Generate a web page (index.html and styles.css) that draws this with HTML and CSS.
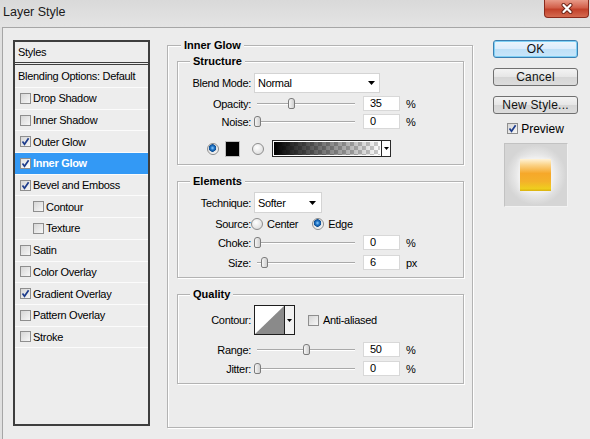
FILE: index.html
```html
<!DOCTYPE html>
<html lang="en">
<head>
    <meta charset="UTF-8">
    <title>Layer Style</title>
    <link rel="stylesheet" href="styles.css">
</head>
<body>

<div class="titlebar">
    <span class="title">Layer Style</span>
    <div class="close">
        <svg width="14" height="11" viewBox="0 0 14 11">
            <path d="M3.5 2 L10.5 9 M10.5 2 L3.5 9" stroke="#6a2317" stroke-width="4" stroke-linecap="round"/>
            <path d="M3.5 2 L10.5 9 M10.5 2 L3.5 9" stroke="#fff" stroke-width="2.2" stroke-linecap="round"/>
        </svg>
    </div>
</div>

<div class="client">

    <div class="styles-list">
        <div class="styles-head">Styles</div>
        <div class="blend-row">Blending Options: Default</div>
        <div class="item"><span class="cb"></span>Drop Shadow</div>
        <div class="item"><span class="cb"></span>Inner Shadow</div>
        <div class="item"><span class="cb"><svg viewBox="0 0 9 9"><path d="M1.5 4.5 L3.5 7.2 L7.6 1.2"/></svg></span>Outer Glow</div>
        <div class="item selected"><span class="cb"><svg viewBox="0 0 9 9"><path d="M1.5 4.5 L3.5 7.2 L7.6 1.2"/></svg></span>Inner Glow</div>
        <div class="item"><span class="cb"><svg viewBox="0 0 9 9"><path d="M1.5 4.5 L3.5 7.2 L7.6 1.2"/></svg></span>Bevel and Emboss</div>
        <div class="item sub"><span class="cb"></span>Contour</div>
        <div class="item sub"><span class="cb"></span>Texture</div>
        <div class="item"><span class="cb"></span>Satin</div>
        <div class="item"><span class="cb"></span>Color Overlay</div>
        <div class="item"><span class="cb"><svg viewBox="0 0 9 9"><path d="M1.5 4.5 L3.5 7.2 L7.6 1.2"/></svg></span>Gradient Overlay</div>
        <div class="item"><span class="cb"></span>Pattern Overlay</div>
        <div class="item"><span class="cb"></span>Stroke</div>
    </div>

    <fieldset class="group main">
        <legend>Inner Glow</legend>

        <fieldset class="group sub-group structure">
            <legend>Structure</legend>
            <div class="row h-select">
                <span class="lbl">Blend Mode:</span>
                <div class="select blend-select">Normal<svg width="7" height="4"><path d="M0 0h7L3.5 4z"/></svg></div>
            </div>
            <div class="row h-slider gap3">
                <span class="lbl">Opacity:</span>
                <div class="slider"><span class="knob" style="left:31px"></span></div>
                <div class="num">35</div><span class="unit">%</span>
            </div>
            <div class="row h-slider gap3">
                <span class="lbl">Noise:</span>
                <div class="slider"><span class="knob" style="left:-3px"></span></div>
                <div class="num">0</div><span class="unit">%</span>
            </div>
            <div class="row color-row">
                <span class="radio on first"></span>
                <span class="swatch"></span>
                <span class="radio second"></span>
                <div class="grad"><span class="grad-fill"></span><span class="grad-arrow"><svg width="5" height="3"><path d="M0 0h5L2.5 3z"/></svg></span></div>
            </div>
        </fieldset>

        <fieldset class="group sub-group elements">
            <legend>Elements</legend>
            <div class="row h-technique">
                <span class="lbl">Technique:</span>
                <div class="select tech-select">Softer<svg width="7" height="4"><path d="M0 0h7L3.5 4z"/></svg></div>
            </div>
            <div class="row h-source">
                <span class="lbl">Source:</span>
                <span class="radio"></span><span class="opt">Center</span>
                <span class="radio on edge"></span><span class="opt">Edge</span>
            </div>
            <div class="row h-slider gap4">
                <span class="lbl">Choke:</span>
                <div class="slider"><span class="knob" style="left:-3px"></span></div>
                <div class="num">0</div><span class="unit">%</span>
            </div>
            <div class="row h-slider gap5">
                <span class="lbl">Size:</span>
                <div class="slider"><span class="knob" style="left:4px"></span></div>
                <div class="num">6</div><span class="unit">px</span>
            </div>
        </fieldset>

        <fieldset class="group sub-group quality">
            <legend>Quality</legend>
            <div class="row h-contour">
                <span class="lbl">Contour:</span>
                <div class="contour">
                    <svg width="29" height="28" viewBox="0 0 29 28"><path d="M0 28 L29 0 L29 28 Z" fill="#8a8a8a"/></svg>
                    <span class="contour-arrow"><svg width="5" height="3"><path d="M0 0h5L2.5 3z"/></svg></span>
                </div>
                <span class="cb anti"></span><span class="opt">Anti-aliased</span>
            </div>
            <div class="row h-slider gap7">
                <span class="lbl">Range:</span>
                <div class="slider"><span class="knob" style="left:46px"></span></div>
                <div class="num">50</div><span class="unit">%</span>
            </div>
            <div class="row h-slider gap4">
                <span class="lbl">Jitter:</span>
                <div class="slider"><span class="knob" style="left:-3px"></span></div>
                <div class="num">0</div><span class="unit">%</span>
            </div>
        </fieldset>
    </fieldset>

    <div class="side">
        <button class="btn default">OK</button>
        <button class="btn">Cancel</button>
        <button class="btn">New Style...</button>
        <div class="preview-check">
            <span class="cb"><svg viewBox="0 0 9 9"><path d="M1.5 4.5 L3.5 7.2 L7.6 1.2"/></svg></span>Preview
        </div>
        <div class="preview">
            <span class="preview-box"></span>
        </div>
    </div>

</div>

</body>
</html>
```

FILE: styles.css
```css
* {
    box-sizing: border-box;
}

body {
    margin: 0;
    width: 590px;
    height: 439px;
    overflow: hidden;
    background: #e0e0e0;
    font-family: "Liberation Sans", Arial, sans-serif;
    font-size: 11px;
    letter-spacing: -0.3px;
    color: #000;
}

/* title bar */
.titlebar {
    height: 27px;
    display: flex;
    justify-content: space-between;
    align-items: flex-start;
    background: linear-gradient(#d9d9d9, #e4e4e4);
}

.title {
    font-size: 12.5px;
    letter-spacing: 0;
    padding: 5px 0 0 3px;
    color: #1a1a1a;
}

.close {
    width: 45px;
    height: 18px;
    margin-right: 1px;
    border: 1px solid #8a2a1c;
    border-top: none;
    border-radius: 0 0 4px 4px;
    background: linear-gradient(#e89a88, #d2604a 45%, #c2412a 55%, #d46a50);
    display: flex;
    align-items: center;
    justify-content: center;
}

/* client area */
.client {
    height: 412px;
    margin-left: 2px;
    border-left: 1px solid #a6a6a6;
    border-top: 1px solid #a6a6a6;
    background: #ececec;
    display: flex;
    align-items: flex-start;
    padding: 12px 0 0 10px;
}

/* styles list */
.styles-list {
    width: 137px;
    height: 386px;
    border: 2px solid #3e3e3e;
    background: #ededed;
}

.styles-head {
    height: 23px;
    line-height: 20px;
    padding-left: 3px;
    border-bottom: 3px double #3e3e3e;
}

.blend-row {
    height: 23px;
    line-height: 22px;
    padding-left: 3px;
    border-bottom: 1px solid #fbfbfb;
}

.item {
    height: 21.7px;
    display: flex;
    align-items: center;
    padding-left: 5px;
    border-bottom: 1px solid #fbfbfb;
}

.item.sub {
    padding-left: 18px;
}

.item.selected {
    background: #3399f5;
    color: #fff;
    font-weight: bold;
}

/* checkbox */
.cb {
    width: 11px;
    height: 11px;
    margin-right: 2px;
    border: 1px solid #8e8e8e;
    background: linear-gradient(135deg, #d6d6d6, #f7f7f7);
    display: inline-flex;
    flex-shrink: 0;
}

.cb svg {
    width: 9px;
    height: 9px;
}

.cb path {
    fill: none;
    stroke: #1d3c8c;
    stroke-width: 1.7;
}

.selected .cb {
    background: linear-gradient(135deg, #e0e0e0, #fff);
}

/* group boxes */
.group {
    margin: 0;
    padding: 0;
    min-width: 0;
    border: 1px solid #b3b3b3;
    box-shadow: inset 1px 1px 0 #fff, 1px 1px 0 #fff;
}

.group legend {
    font-weight: bold;
    letter-spacing: 0;
    line-height: 13px;
    padding: 0 3px;
    background: #ececec;
}

.main {
    width: 306px;
    height: 389px;
    margin: -1px 0 0 17px;
    padding: 3px 8px 0 9px;
}

.main > legend {
    margin-left: 4px;
}

.sub-group > legend {
    margin-left: 12px;
}

.structure {
    padding: 5px 0 7px;
}

.elements {
    margin-top: 10px;
    padding: 4px 0 7px;
}

.quality {
    margin-top: 10px;
    padding: 4px 0 7px;
}

/* rows */
.row {
    display: flex;
    align-items: center;
}

.lbl {
    width: 73px;
    text-align: right;
    flex-shrink: 0;
}

.h-select { height: 20px; }
.h-technique { height: 21px; }
.h-slider { height: 15px; }
.h-source { height: 14px; margin-top: 4px; }
.h-contour { height: 30px; }

.gap3 { margin-top: 3px; }
.gap4 { margin-top: 4px; }
.gap5 { margin-top: 5px; }
.gap7 { margin-top: 7px; }

.select {
    height: 100%;
    margin-left: 3px;
    padding: 0 4px 0 3px;
    background: #fff;
    border: 1px solid #d4d4d4;
    display: flex;
    align-items: center;
    justify-content: space-between;
}

.blend-select { width: 126px; }
.tech-select { width: 68px; padding-right: 5px; }

.slider {
    position: relative;
    width: 98px;
    height: 15px;
    margin-left: 6px;
}

.slider::before {
    content: "";
    position: absolute;
    left: 0;
    right: 0;
    top: 7px;
    height: 1px;
    background: #a9a9a9;
    box-shadow: 0 1px 0 #fff;
}

.knob {
    position: absolute;
    top: 2px;
    width: 7px;
    height: 11px;
    border: 1px solid #7c7c7c;
    border-radius: 3px 3px 2px 2px;
    background: linear-gradient(90deg, #f6f6f6, #cfcfcf);
}

.num {
    width: 37px;
    height: 15px;
    margin-left: 8px;
    padding-left: 6px;
    line-height: 13px;
    background: #fff;
    border: 1px solid #d8d8d8;
}

.unit {
    margin-left: 6px;
}

/* colour row */
.color-row {
    height: 17px;
    margin-top: 11px;
}

.radio {
    width: 12px;
    height: 12px;
    border-radius: 50%;
    border: 1px solid #8d8d8d;
    background: radial-gradient(circle at 40% 35%, #fff, #d4d4d4);
    flex-shrink: 0;
}

.radio.on {
    background: radial-gradient(circle at 45% 40%, #8fd0ff 0, #1f72c4 2px, #0d4f94 3.5px, #e2e2e2 4px, #fafafa 6px);
}

.radio.first { margin-left: 29px; }
.radio.second { margin-left: 12px; }
.radio.edge { margin-left: 14px; }

.opt {
    margin-left: 4px;
}

.swatch {
    width: 15px;
    height: 16px;
    margin-left: 6px;
    background: #000;
    border: 1px solid #bdbdbd;
}

.grad {
    width: 119px;
    height: 17px;
    margin-left: 8px;
    border: 1px solid #2a2a2a;
    display: flex;
}

.grad-fill {
    flex: 1;
    border: 1px solid #fff;
    background:
        linear-gradient(to right, #000, rgba(0, 0, 0, 0)),
        repeating-conic-gradient(#cdcdcd 0 25%, #fff 0 50%) 0 0 / 8px 8px;
}

.grad-arrow {
    width: 9px;
    border-left: 1px solid #2a2a2a;
    background: #fff;
    display: flex;
    align-items: center;
    justify-content: center;
}

/* contour */
.contour {
    width: 41px;
    height: 30px;
    margin-left: 3px;
    border: 1px solid #1e1e1e;
    background: #fff;
    display: flex;
}

.contour-arrow {
    flex: 1;
    border-left: 1px solid #1e1e1e;
    background: #f2f2f2;
    display: flex;
    align-items: center;
    justify-content: center;
}

.cb.anti {
    margin-left: 13px;
}

.quality .opt {
    margin-left: 2px;
}

/* right column */
.side {
    width: 85px;
    margin-left: 20px;
    display: flex;
    flex-direction: column;
    align-items: center;
}

.btn {
    width: 85px;
    height: 18px;
    margin: 0 0 10px;
    padding: 0;
    font-family: "Liberation Sans", Arial, sans-serif;
    font-size: 12px;
    letter-spacing: 0.2px;
    color: #111;
    border: 1px solid #707070;
    border-radius: 3px;
    background: linear-gradient(#f3f3f3, #e6e6e6 50%, #d6d6d6 51%, #dcdcdc);
}

.btn.default {
    border-color: #3c7fb1;
    background: linear-gradient(#ebf5fc, #dcecfc 50%, #bee0f7 51%, #c9e6fa);
    box-shadow: inset 0 0 0 1px #7fd0f5;
}

.preview-check {
    height: 13px;
    margin-top: -2px;
    display: flex;
    align-items: center;
    font-size: 12px;
    letter-spacing: 0;
}

.preview-check .cb {
    margin-right: 3px;
}

.preview {
    width: 64px;
    height: 64px;
    margin-top: 8px;
    border: 1px solid #c2c2c2;
    border-right-color: #f2f2f2;
    border-bottom-color: #f2f2f2;
    background: radial-gradient(circle, #eeeeee 17px, #d5d5d5 30px);
    display: flex;
    align-items: center;
    justify-content: center;
}

.preview-box {
    width: 31px;
    height: 32px;
    background: linear-gradient(#fff3d8 0%, #fbd48a 18%, #f6a82a 45%, #f4b12a 70%, #efcd1e 92%, #d9b10e 100%);
    box-shadow: 0 0 4px #f6f6f6;
}
```
